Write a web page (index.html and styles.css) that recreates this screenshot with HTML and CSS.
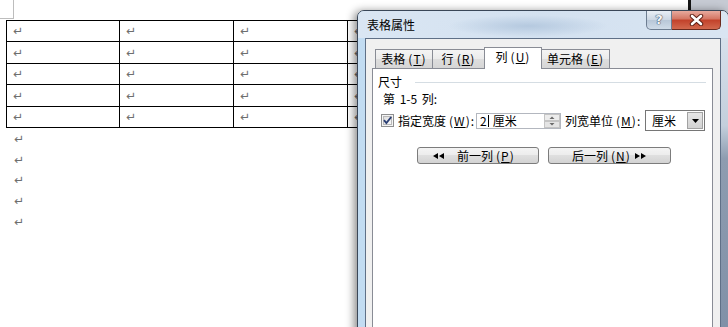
FILE: index.html
```html
<!DOCTYPE html>
<html lang="zh-CN">
<head>
    <meta charset="UTF-8">
    <meta name="viewport" content="width=device-width, initial-scale=1.0">
    <title>表格属性</title>
    <link rel="stylesheet" href="styles.css">
</head>
<body>
    <div class="doc">
        <div class="corner"></div>
        <div class="doc-table">
            <div class="cell"><span class="pm">↵</span></div>
            <div class="cell"><span class="pm">↵</span></div>
            <div class="cell"><span class="pm">↵</span></div>
            <div class="cell"><span class="pm">↵</span></div>
            <div class="cell"><span class="pm">↵</span></div>
            <div class="cell"><span class="pm">↵</span></div>
            <div class="cell"><span class="pm">↵</span></div>
            <div class="cell"><span class="pm">↵</span></div>
            <div class="cell"><span class="pm">↵</span></div>
            <div class="cell"><span class="pm">↵</span></div>
            <div class="cell"><span class="pm">↵</span></div>
            <div class="cell"><span class="pm">↵</span></div>
            <div class="cell"><span class="pm">↵</span></div>
            <div class="cell"><span class="pm">↵</span></div>
            <div class="cell"><span class="pm">↵</span></div>
            <div class="cell"><span class="pm">↵</span></div>
            <div class="cell"><span class="pm">↵</span></div>
            <div class="cell"><span class="pm">↵</span></div>
            <div class="cell"><span class="pm">↵</span></div>
            <div class="cell"><span class="pm">↵</span></div>
        </div>
        <div class="para"><span class="pm">↵</span></div>
        <div class="para"><span class="pm">↵</span></div>
        <div class="para"><span class="pm">↵</span></div>
        <div class="para"><span class="pm">↵</span></div>
        <div class="para"><span class="pm">↵</span></div>
    </div>
    <div class="doc-edge"></div>
    <div class="desktop"></div>

    <!-- 表格属性 dialog -->
    <div class="dialog">
        <div class="titlebar">
            <div class="title">表格属性</div>
            <div class="caption-btns">
                <div class="cap-help">?</div>
                <div class="cap-close">
                    <svg width="15" height="12" viewBox="0 0 15 12">
                        <path d="M3 2 L12 10 M12 2 L3 10" stroke="#5b1d12" stroke-width="4.4" stroke-linecap="round"/>
                        <path d="M3 2 L12 10 M12 2 L3 10" stroke="#ffffff" stroke-width="2.6" stroke-linecap="round"/>
                    </svg>
                </div>
            </div>
        </div>
        <div class="client">
            <div class="tabs">
                <div class="tab tab-table">表格<span class="key">(<u>T</u>)</span></div>
                <div class="tab tab-row">行<span class="key">(<u>R</u>)</span></div>
                <div class="tab tab-col active">列<span class="key">(<u>U</u>)</span></div>
                <div class="tab tab-cell">单元格<span class="key">(<u>E</u>)</span></div>
            </div>
            <div class="panel">
                <div class="group-head">尺寸</div>
                <div class="cols-label">第 1-5 列:</div>
                <div class="width-row">
                    <span class="checkbox">
                        <svg width="13" height="13" viewBox="0 0 13 13">
                            <defs>
                                <linearGradient id="cbg" x1="0" y1="0" x2="1" y2="1">
                                    <stop offset="0" stop-color="#dcdcdc"/>
                                    <stop offset="1" stop-color="#fbfbfb"/>
                                </linearGradient>
                            </defs>
                            <rect x="0.5" y="0.5" width="12" height="12" fill="#f4f4f4" stroke="#8e8f8f"/>
                            <rect x="2.5" y="2.5" width="8" height="8" fill="url(#cbg)" stroke="#b9b9b9"/>
                            <path d="M3 6.2 L5.4 9 L10.2 3" fill="none" stroke="#2b3f74" stroke-width="1.9"/>
                        </svg>
                    </span>
                    <label class="lbl-width">指定宽度<span class="key">(<u>W</u>)</span>:</label>
                    <div class="spin-input">
                        <span class="value">2<span class="caret"></span>厘米</span>
                        <span class="spin">
                            <svg width="16" height="14" viewBox="0 0 16 14">
                                <rect x="0.5" y="0.5" width="15" height="6" fill="#ececec" stroke="#c4c4c4"/>
                                <rect x="0.5" y="7.5" width="15" height="6" fill="#e4e4e4" stroke="#c4c4c4"/>
                                <path d="M5.5 5 L8 2.5 L10.5 5 Z" fill="#6a6a6a"/>
                                <path d="M5.5 9 L8 11.5 L10.5 9 Z" fill="#6a6a6a"/>
                            </svg>
                        </span>
                    </div>
                    <label class="lbl-unit">列宽单位<span class="key">(<u>M</u>)</span>:</label>
                    <div class="select">
                        <span class="select-text">厘米</span>
                        <span class="drop">
                            <svg width="7" height="4" viewBox="0 0 7 4"><path d="M0 0 H7 L3.5 4 Z" fill="#000"/></svg>
                        </span>
                    </div>
                </div>
                <div class="nav-row">
                    <button class="btn btn-prev">
                        <svg width="11" height="6" viewBox="0 0 11 6"><path d="M0 3 L5 0 V6 Z M6 3 L11 0 V6 Z" fill="#000"/></svg>
                        <span>前一列<span class="key">(<u>P</u>)</span></span>
                    </button>
                    <button class="btn btn-next">
                        <span>后一列<span class="key">(<u>N</u>)</span></span>
                        <svg width="11" height="6" viewBox="0 0 11 6"><path d="M0 0 L5 3 L0 6 Z M6 0 L11 3 L6 6 Z" fill="#000"/></svg>
                    </button>
                </div>
            </div>
        </div>
    </div>
</body>
</html>
```

FILE: styles.css
```css
*{
    box-sizing: border-box;
}
body{
    margin: 0;
    height: 327px;
    overflow: hidden;
    display: flex;
    font-family: "Noto Sans CJK SC", "Liberation Sans", sans-serif;
    font-size: 12px;
    line-height: 16px;
    color: #000;
}

/* document behind the dialog */
.doc{
    width: 688px;
    height: 100%;
    background: #fff;
}
.doc-edge{
    width: 3px;
    background: #151515;
}
.desktop{
    flex: 1;
    background: #c6cad3;
}
.corner{
    width: 14px;
    height: 19px;
    border-right: 1px solid #bdbdbd;
    border-bottom: 1px solid #bdbdbd;
}
.doc-table{
    display: grid;
    grid-template-columns: 113px 114px 114px 114px;
    grid-template-rows: 21px 22px 21px 22px 21px;
    width: max-content;
    margin: 1px 0 0 6px;
    border-left: 1px solid #000;
    border-top: 1px solid #000;
}
.cell{
    display: flex;
    align-items: center;
    padding-left: 6px;
    border-right: 1px solid #000;
    border-bottom: 1px solid #000;
}
.pm{
    font-family: "DejaVu Sans", sans-serif;
    font-size: 12px;
    line-height: 12px;
    color: #6e6e6e;
}
.para{
    display: flex;
    align-items: center;
    height: 20.75px;
    padding: 1px 0 0 14px;
}

/* dialog */
.dialog{
    position: absolute;
    left: 357px;
    top: 10px;
    width: 372px;
    height: 330px;
    padding: 0 7px;
    display: flex;
    flex-direction: column;
    border: 1px solid #3a4758;
    border-radius: 7px 7px 0 0;
    background:
        linear-gradient(to right, #c2dcf2 0 7px, transparent 7px),
        linear-gradient(#dde6f0 0, #c3cfdc 35%, #8d9cb0 45%, #7f90a7 100%);
    box-shadow: -3px 1px 8px rgba(0, 0, 0, .45);
}
.titlebar{
    height: 27px;
    margin: 0 -7px;
    padding-left: 9px;
    display: flex;
    justify-content: space-between;
    border-radius: 6px 6px 0 0;
    background:
        radial-gradient(ellipse 80px 11px at 170px 15px, #b5c9df, rgba(181, 201, 223, 0)),
        linear-gradient(to right, #dae6f3, #d3e1f0 50%, #d9e5f2);
}
.title{
    margin-top: 6px;
}
.caption-btns{
    display: flex;
    height: 19px;
    margin-right: 7px;
}
.cap-help{
    width: 26px;
    border: 1px solid #6d7d91;
    border-top: none;
    border-radius: 0 0 0 5px;
    background: linear-gradient(#e9eff6, #cbd6e3 50%, #b7c6d7 50%, #cfdbe8);
    text-align: center;
    font-family: "DejaVu Sans", sans-serif;
    font-weight: bold;
    font-size: 13px;
    line-height: 17px;
    color: #f4f6f9;
    text-shadow: 0 0 1px #3e4e64, 0 0 1px #3e4e64, 0 0 1px #3e4e64;
}
.cap-close{
    width: 49px;
    display: flex;
    align-items: center;
    justify-content: center;
    border: 1px solid #6a2a1e;
    border-top: none;
    border-left: none;
    border-radius: 0 0 5px 0;
    background: linear-gradient(#e8aa9e, #d47562 45%, #c2412a 50%, #d2694e);
}
.client{
    flex: 1;
    display: flex;
    flex-direction: column;
    padding: 8px 7px 0 6px;
    background: #f0f0f0;
    border: 1px solid #5f7087;
    border-bottom: none;
}
.key{
    margin-left: 3px;
    letter-spacing: 1px;
}

/* tabs */
.tabs{
    position: relative;
    display: flex;
    align-items: flex-end;
    height: 22px;
    margin: 0 0 -1px 3px;
}
.tab{
    height: 19px;
    margin-bottom: 1px;
    margin-left: -1px;
    display: flex;
    align-items: center;
    justify-content: center;
    border: 1px solid #898c95;
    border-bottom: none;
    background: linear-gradient(#f4f4f4, #ebebeb 50%, #dedede 50%, #d6d6d6);
}
.tab-table{ width: 58px; margin-left: 0; }
.tab-row{ width: 53px; }
.tab-col{ width: 58px; }
.tab-cell{ width: 69px; }
.tab.active{
    position: relative;
    z-index: 1;
    height: 22px;
    margin-bottom: 0;
    padding-bottom: 3px;
    background: #fff;
}
.panel{
    flex: 1;
    padding-top: 5px;
    background: #fff;
    border: 1px solid #898c95;
}
.group-head{
    display: flex;
    align-items: center;
    height: 16px;
    padding: 0 6px 0 5px;
}
.group-head::after{
    content: "";
    flex: 1;
    height: 1px;
    margin-left: 13px;
    background: #d5dde3;
}
.cols-label{
    height: 16px;
    margin-top: 1px;
    padding-left: 10px;
    word-spacing: 2px;
}
.width-row{
    display: flex;
    align-items: center;
    height: 21px;
    margin-top: 3px;
    padding-left: 8px;
}
.checkbox{
    display: flex;
    width: 13px;
    height: 13px;
}
.lbl-width{
    width: 78px;
    margin-left: 4px;
}
.lbl-unit{
    width: 80px;
    margin-left: 4px;
}
.spin-input{
    display: flex;
    align-items: center;
    width: 85px;
    height: 16px;
    border: 1px solid #b3b7bf;
    background: #fff;
}
.value{
    flex: 1;
    display: flex;
    align-items: center;
    padding-left: 3px;
}
.caret{
    width: 1px;
    height: 12px;
    margin: 0 4px 0 1px;
    background: #000;
}
.spin{
    display: flex;
}
.select{
    display: flex;
    align-items: center;
    justify-content: space-between;
    width: 60px;
    height: 21px;
    padding-left: 6px;
    border: 1px solid #767676;
    background: #fff;
}
.drop{
    display: flex;
    align-items: center;
    justify-content: center;
    width: 16px;
    height: 17px;
    margin-right: 1px;
    border: 1px solid #a2a2a2;
    background: linear-gradient(#e6e6e6, #d2d2d2);
}
.nav-row{
    display: flex;
    gap: 9px;
    margin-top: 16px;
    padding-left: 44px;
}
.btn{
    display: flex;
    align-items: center;
    height: 17px;
    font: inherit;
    color: #000;
    border: 1px solid #7c7c7c;
    border-radius: 3px;
    background: linear-gradient(#f4f4f4, #ececec 50%, #dfdfdf 50%, #d3d3d3);
}
.btn-prev{
    width: 122px;
    gap: 13px;
    padding: 0 0 0 15px;
}
.btn-next{
    width: 123px;
    gap: 4px;
    padding: 0 0 0 23px;
}
```
